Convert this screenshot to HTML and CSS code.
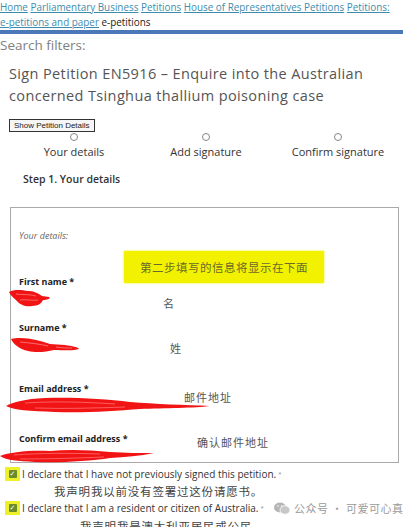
FILE: index.html
```html
<!DOCTYPE html>
<html lang="en">
<head>
    <meta charset="UTF-8">
    <meta name="viewport" content="width=device-width, initial-scale=1.0">
    <title>Sign Petition EN5916</title>
    <link rel="stylesheet" href="styles.css">
</head>
<body>
    <div class="crumbs">
        <a href="#">Home</a> <a href="#">Parliamentary Business</a> <a href="#">Petitions</a> <a href="#">House of Representatives Petitions</a> <a href="#">Petitions: <span class="nowrap">e-petitions</span> and paper</a> e-petitions
    </div>
    <div class="bar"></div>
    <div class="filters">Search filters:</div>

    <h1>Sign Petition EN5916 – Enquire into the Australian concerned Tsinghua thallium poisoning case</h1>

    <button class="details-btn">Show Petition Details</button>

    <div class="steps">
        <div class="step"><span class="dot"></span>Your details</div>
        <div class="step"><span class="dot"></span>Add signature</div>
        <div class="step"><span class="dot"></span>Confirm signature</div>
    </div>

    <h2 class="step-title">Step 1. Your details</h2>

    <div class="form-box">
        <div class="legend">Your details:</div>

        <div class="label-row">
            <label class="field-label">First name *</label>
            <div class="note">第二步填写的信息将显示在下面</div>
        </div>
        <div class="value-row first">
            <svg class="scribble" width="42" height="20" viewBox="0 0 42 20">
                <path d="M1 4 C6 1 14 2 20 3 C26 3 30 5 34 8 L41 9 C43 10 40 12 35 12 C34 15 30 18 24 18 C18 19 12 17 9 13 C6 10 3 8 1 4 Z" fill="#f01414"/>
                <path d="M8 6 C14 7 22 6 28 8 M12 12 C18 11 24 13 30 12" fill="none" stroke="#ff7a7a" stroke-width="0.8"/>
            </svg>
            <span class="hint hint-name">名</span>
        </div>

        <label class="field-label">Surname *</label>
        <div class="value-row surname">
            <svg class="scribble" width="70" height="18" viewBox="0 0 70 18">
                <path d="M1 3 C8 1 18 2 26 4 C32 5 36 7 40 8 L55 9 C62 10 68 11 69 13 C64 15 52 14 44 14 C36 16 26 17 18 15 C10 13 4 9 1 3 Z" fill="#f01414"/>
                <path d="M10 6 C20 7 30 8 38 10 M46 11 C52 12 58 12 62 12" fill="none" stroke="#ff8080" stroke-width="0.8"/>
            </svg>
            <span class="hint hint-surname">姓</span>
        </div>

        <label class="field-label email">Email address *</label>
        <div class="value-row email-row">
            <svg class="scribble" width="206" height="18" viewBox="0 0 206 18">
                <path d="M1 10 C8 6 20 3 40 2 C70 1 100 3 125 6 C150 8 180 9 205 10 C190 12 160 12 135 13 C110 15 80 17 50 16 C25 15 8 14 1 10 Z" fill="#f01414"/>
                <path d="M20 7 C50 5 80 6 110 8 M30 12 C60 13 90 12 120 11" fill="none" stroke="#ff7070" stroke-width="0.8"/>
            </svg>
            <span class="hint hint-email">邮件地址</span>
        </div>

        <div class="label-row confirm">
            <label class="field-label">Confirm email address *</label>
            <span class="hint hint-confirm">确认邮件地址</span>
        </div>
        <svg class="scribble confirm-mark" width="155" height="18" viewBox="0 0 155 18">
            <path d="M0 9 C10 5 30 3 50 4 C70 2 90 3 110 5 C125 6 140 6 154 6 C140 9 125 10 110 11 C90 14 60 16 35 15 C18 14 5 13 0 9 Z" fill="#f01414"/>
            <path d="M14 8 C40 6 70 6 100 7 M20 12 C50 12 80 11 104 10" fill="none" stroke="#ff7070" stroke-width="0.8"/>
        </svg>
    </div>

    <div class="declare">
        <span class="check"><span class="box">&#10003;</span></span>I declare that I have not previously signed this petition. <sup>*</sup>
    </div>
    <div class="cn-line first-cn">我声明我以前没有签署过这份请愿书。</div>
    <div class="declare second">
        <span class="check"><span class="box">&#10003;</span></span>I declare that I am a resident or citizen of Australia. <sup>*</sup>
        <span class="watermark">
            <svg width="16" height="13" viewBox="0 0 16 13">
                <ellipse cx="6" cy="5.5" rx="6" ry="5" fill="#b5b5b5"/>
                <ellipse cx="11" cy="8" rx="5" ry="4.3" fill="#c8c8c8" stroke="#fff" stroke-width="0.8"/>
                <circle cx="4" cy="4" r="0.8" fill="#fff"/>
                <circle cx="7.6" cy="4" r="0.8" fill="#fff"/>
            </svg>
            公众号 · 可爱可心真
        </span>
    </div>
    <div class="cn-line second-cn">我声明我是澳大利亚居民或公民</div>
</body>
</html>
```

FILE: styles.css
```css
body {
    margin: 0;
    font-family: "Open Sans", "DejaVu Sans", sans-serif;
    color: #333;
    background-color: #fff;
    overflow: hidden;
}
.crumbs {
    font-size: 9.9px;
    line-height: 15px;
    color: #222;
    width: 400px;
}
.crumbs a {
    color: #3e8cad;
}
.nowrap {
    white-space: nowrap;
}
.bar {
    width: 403px;
    height: 4px;
    background-color: #4a78b8;
}
.filters {
    font-size: 13.5px;
    line-height: 20px;
    color: #808080;
    margin-top: 1px;
}
h1 {
    font-size: 14.5px;
    font-weight: normal;
    color: #555;
    line-height: 22px;
    letter-spacing: 0.37px;
    margin: 8px 0 0 9px;
    width: 380px;
}
.details-btn {
    display: block;
    margin: 12px 0 0 9px;
    padding: 0 4px;
    height: 13px;
    font-family: "Liberation Sans", sans-serif;
    font-size: 8px;
    color: #222;
    background-color: #f6f6f6;
    border: 1px solid #333;
    border-radius: 0;
}
.steps {
    display: grid;
    grid-template-columns: repeat(3, 132px);
    margin: 1px 0 0 8px;
}
.step {
    display: flex;
    flex-direction: column;
    align-items: center;
    font-size: 11px;
    line-height: 14px;
    color: #333;
}
.dot {
    width: 6px;
    height: 6px;
    border: 1px solid #888;
    border-radius: 50%;
    margin-bottom: 4px;
}
.step-title {
    font-size: 10.5px;
    font-weight: 600;
    color: #333;
    margin: 13px 0 0 23px;
    line-height: 14px;
}
.form-box {
    margin: 21px 0 0 10px;
    width: 389px;
    height: 256px;
    border: 1px solid #aaa;
    padding: 0 0 0 8px;
    box-sizing: border-box;
}
.legend {
    font-style: italic;
    font-size: 9px;
    color: #666;
    margin-top: 22px;
    line-height: 12px;
}
.label-row {
    display: flex;
    align-items: flex-end;
}
.field-label {
    display: block;
    font-size: 9px;
    font-weight: 700;
    color: #222;
    line-height: 12px;
}
.label-row .field-label {
    width: 105px;
    flex-shrink: 0;
}
.note {
    width: 200px;
    height: 32px;
    margin: 9px 0 5px;
    background-color: #f2f200;
    color: #6b6a2a;
    font-family: "Noto Sans CJK SC", sans-serif;
    font-size: 11.5px;
    display: flex;
    align-items: center;
    justify-content: center;
    letter-spacing: 0.5px;
    box-shadow: 0 0 2px #f2f200;
}
.value-row {
    display: flex;
    align-items: flex-start;
}
.scribble {
    display: block;
    flex-shrink: 0;
}
.hint {
    font-family: "Noto Sans CJK SC", sans-serif;
    font-size: 11px;
    color: #555;
    line-height: 12px;
    letter-spacing: 1px;
}
.value-row.first {
    margin: 0 0 0 -11px;
    height: 34px;
}
.hint-name {
    margin: 9px 0 0 113px;
}
.value-row.surname {
    margin: 2px 0 0 -9px;
    height: 27px;
}
.hint-surname {
    margin: 6px 0 0 90px;
}
.field-label.email {
    margin-top: 20px;
}
.value-row.email-row {
    margin: 1px 0 0 -14px;
    height: 34px;
}
.hint-email {
    margin: -5px 0 0 -27px;
}
.label-row.confirm {
    align-items: center;
}
.label-row.confirm .field-label {
    width: 178px;
}
.hint-confirm {
    margin-top: 6px;
}
.confirm-mark {
    margin: -1px 0 0 -19px;
}
.declare {
    position: relative;
    font-size: 10px;
    line-height: 14px;
    color: #333;
    margin: 4px 0 0 0;
    display: flex;
    align-items: center;
}
.declare sup {
    font-size: 6px;
    color: #888;
    margin-left: 2px;
}
.check {
    width: 15px;
    height: 14px;
    margin: 0 2px 0 5px;
    background-color: #eef02a;
    display: flex;
    align-items: center;
    justify-content: center;
}
.box {
    width: 8px;
    height: 8px;
    background-color: #6b8a2a;
    color: #fff;
    font-size: 7px;
    line-height: 8px;
    text-align: center;
    border-radius: 1px;
}
.cn-line {
    font-family: "Noto Sans CJK SC", sans-serif;
    font-size: 11.5px;
    color: #444;
    line-height: 16px;
    letter-spacing: 0.8px;
}
.first-cn {
    margin: 2px 0 0 54px;
}
.declare.second {
    margin-top: 2px;
}
.watermark {
    position: absolute;
    left: 274px;
    top: 0;
    display: flex;
    align-items: center;
    gap: 4px;
    font-family: "Noto Sans CJK SC", sans-serif;
    font-size: 11px;
    color: #9a9a9a;
    letter-spacing: 0.5px;
}
.second-cn {
    margin: 3px 0 0 80px;
}
```
